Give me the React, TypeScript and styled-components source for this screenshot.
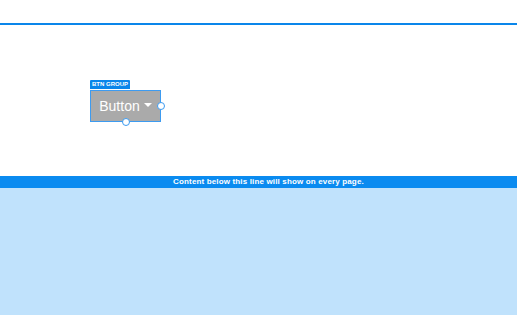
import React from "react";
import styled, { createGlobalStyle } from "styled-components";

const GlobalStyle = createGlobalStyle`
  html, body {
    margin: 0;
    padding: 0;
    background: #ffffff;
    font-family: "Liberation Sans", Arial, sans-serif;
  }
`;

const Page = styled.div`
  width: 517px;
  height: 315px;
  display: flex;
  flex-direction: column;
  overflow: hidden;
`;

const TopRule = styled.div`
  margin-top: 23px;
  height: 2px;
  background: #0a86ea;
`;

const Canvas = styled.div`
  height: 151px;
  padding: 65px 0 0 90px;
  box-sizing: border-box;
`;

const Selection = styled.div`
  position: relative;
  display: inline-block;
  border: 1px solid #3d9bf0;
`;

const Tag = styled.span`
  position: absolute;
  left: -1px;
  top: -11px;
  height: 9px;
  padding: 0 2px;
  background: #0a86ea;
  color: #ffffff;
  font-size: 6px;
  font-weight: bold;
  line-height: 9px;
  white-space: nowrap;
  border-radius: 1px 1px 0 0;
`;

const GrayButton = styled.div`
  width: 69px;
  height: 30px;
  background: #aaaaaa;
  color: #ffffff;
  display: flex;
  align-items: center;
  justify-content: center;
  gap: 4px;
  font-size: 14px;
`;

const Caret = styled.span`
  width: 0;
  height: 0;
  border-left: 4px solid transparent;
  border-right: 4px solid transparent;
  border-top: 4px solid #ffffff;
  margin-top: -2px;
`;

const Handle = styled.span<{ $side: "right" | "bottom" }>`
  position: absolute;
  width: 6px;
  height: 6px;
  border-radius: 50%;
  background: #ffffff;
  border: 1px solid #3d9bf0;
  ${(p) =>
    p.$side === "right"
      ? "right: -5px; top: 50%; margin-top: -4px;"
      : "bottom: -5px; left: 50%; margin-left: -4px;"}
`;

const Banner = styled.div`
  height: 12px;
  background: #0a8bf0;
  color: #ffffff;
  font-size: 8px;
  font-weight: bold;
  letter-spacing: 0.15px;
  line-height: 12px;
  text-align: center;
  padding-left: 20px;
`;

const Footer = styled.div`
  flex: 1;
  background: #c0e2fc;
`;

export default function App() {
  return (
    <Page>
      <GlobalStyle />
      <TopRule />
      <Canvas>
        <Selection>
          <Tag>BTN GROUP</Tag>
          <GrayButton>
            Button <Caret />
          </GrayButton>
          <Handle $side="right" />
          <Handle $side="bottom" />
        </Selection>
      </Canvas>
      <Banner>Content below this line will show on every page.</Banner>
      <Footer />
    </Page>
  );
}
